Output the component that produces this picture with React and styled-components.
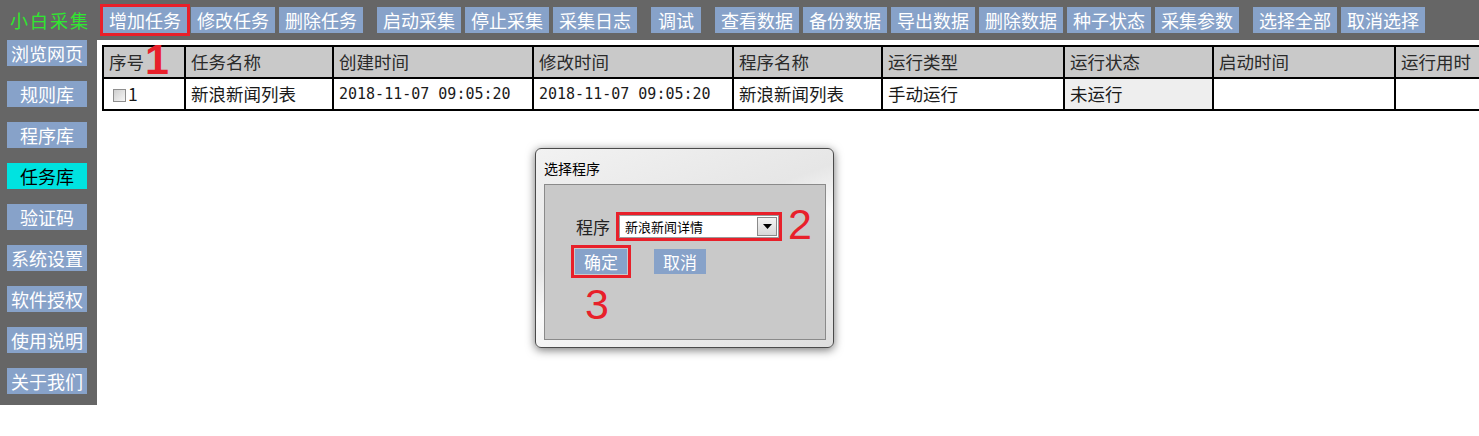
import React from 'react';
import styled, { createGlobalStyle } from 'styled-components';

const Global = createGlobalStyle`
  html, body { margin: 0; padding: 0; background: #fff; overflow: hidden; }
  body { font-family: "Noto Sans CJK SC", "Noto Sans", sans-serif; }
`;

const RED = '#e8202a';
const BLUE = '#87a2c9';
const GRAY = '#666666';

const Page = styled.div`
  position: relative;
  width: 1479px;
  height: 436px;
  overflow: hidden;
  background: #fff;
`;

const TopBar = styled.header`
  display: flex;
  align-items: center;
  height: 40px;
  background: ${GRAY};
`;

const Brand = styled.div`
  flex: none;
  width: 97px;
  box-sizing: border-box;
  padding-left: 10px;
  color: #2fe82f;
  font-size: 18px;
  letter-spacing: 2px;
  line-height: 40px;
  white-space: nowrap;
`;

const Toolbar = styled.nav`
  display: flex;
  align-items: center;
  gap: 4px;
  padding-left: 6px;
`;

const ToolButton = styled.button`
  flex: none;
  min-width: 50px;
  height: 26px;
  padding: 0 6px;
  margin-left: ${(p) => (p.$groupStart ? '10px' : '0')};
  border: none;
  background: ${BLUE};
  color: #fff;
  font-family: inherit;
  font-size: 18px;
  line-height: 26px;
  white-space: nowrap;
  outline: ${(p) => (p.$marked ? `3px solid ${RED}` : 'none')};
  cursor: pointer;
`;

const Main = styled.div`
  display: flex;
  align-items: flex-start;
`;

const Sidebar = styled.aside`
  flex: none;
  width: 97px;
  box-sizing: border-box;
  padding: 0 0 11px 7px;
  background: ${GRAY};
  display: flex;
  flex-direction: column;
  gap: 15px;
`;

const SideButton = styled.button`
  width: 80px;
  height: 26px;
  padding: 0;
  border: none;
  background: ${(p) => (p.$active ? '#00e3e0' : BLUE)};
  color: ${(p) => (p.$active ? '#000' : '#fff')};
  font-family: inherit;
  font-size: 18px;
  line-height: 26px;
  white-space: nowrap;
  text-align: center;
  overflow: visible;
  cursor: pointer;
`;

const Content = styled.section`
  flex: 1;
  padding: 5px 0 0 5px;
  overflow: hidden;
`;

const Table = styled.table`
  border-collapse: collapse;
  table-layout: fixed;
  width: 1460px;
  font-size: 17.5px;
  color: #1a1a1a;
`;

const Th = styled.th`
  height: 30px;
  padding: 0 5px;
  border: 2px solid #000;
  background: #c9c9c9;
  font-weight: normal;
  text-align: left;
  line-height: 30px;
  white-space: nowrap;
  color: #2a2a2a;
`;

const Td = styled.td`
  height: 30px;
  padding: 0 5px;
  border: 2px solid #000;
  background: ${(p) => (p.$shade ? '#eeeeee' : '#fff')};
  line-height: 30px;
  white-space: nowrap;
  font-family: ${(p) => (p.$mono ? '"DejaVu Sans Mono", "Liberation Mono", monospace' : 'inherit')};
  font-size: ${(p) => (p.$mono ? '15px' : '17.5px')};
`;

const Check = styled.span`
  display: inline-block;
  width: 11px;
  height: 11px;
  margin: 0 2px 0 4px;
  vertical-align: -1px;
  border: 1px solid #8e8e8e;
  background: linear-gradient(135deg, #cfcfcf, #f6f6f6);
`;

const Dialog = styled.div`
  position: absolute;
  left: 535px;
  top: 148px;
  width: 299px;
  height: 200px;
  box-sizing: border-box;
  padding: 0 7px 7px 8px;
  border: 1px solid #4a4a4a;
  border-radius: 6px;
  background: linear-gradient(160deg, #f2f2f2 0%, #e6e6e6 40%, #fafafa 55%, #dedede 100%);
  box-shadow: 0 2px 10px rgba(0, 0, 0, 0.55);
  display: flex;
  flex-direction: column;
`;

const DialogTitle = styled.div`
  height: 35px;
  font-size: 14px;
  line-height: 38px;
  color: #000;
`;

const Panel = styled.div`
  flex: 1;
  box-sizing: border-box;
  border: 1px solid #8a8a8a;
  background: #c9c9c9;
  padding: 30px 0 0 31px;
  display: flex;
  flex-direction: column;
  gap: 11px;
`;

const FieldRow = styled.div`
  display: flex;
  align-items: center;
  gap: 9px;
`;

const Label = styled.span`
  font-size: 17px;
  line-height: 23px;
  color: #222;
`;

const Select = styled.div`
  position: relative;
  width: 160px;
  height: 23px;
  box-sizing: border-box;
  border: 1px solid #9a9a9a;
  background: #fff;
  outline: 3px solid ${RED};
  display: flex;
  align-items: center;
  justify-content: space-between;
  padding: 0 1px 0 5px;
  font-size: 13px;
  color: #000;
`;

const Arrow = styled.span`
  width: 20px;
  height: 19px;
  box-sizing: border-box;
  border: 1px solid #8a8a8a;
  background: linear-gradient(#f4f4f4, #d8d8d8);
  display: flex;
  align-items: center;
  justify-content: center;
`;

const ButtonRow = styled.div`
  display: flex;
  gap: 27px;
  margin-left: -1px;
`;

const DialogButton = styled.button`
  width: 52px;
  height: 25px;
  padding: 0;
  border: none;
  background: ${BLUE};
  color: #fff;
  font-family: inherit;
  font-size: 17px;
  line-height: 25px;
  outline: ${(p) => (p.$marked ? `3px solid ${RED}` : 'none')};
  outline-offset: 1px;
  cursor: pointer;
`;

const Marker = styled.span`
  position: absolute;
  color: ${RED};
  font-family: "Liberation Sans", Arial, sans-serif;
  font-size: 43px;
  font-weight: ${(p) => (p.$bold ? 700 : 400)};
  line-height: 1;
  pointer-events: none;
`;

const groups = [
  ['增加任务', '修改任务', '删除任务'],
  ['启动采集', '停止采集', '采集日志'],
  ['调试'],
  ['查看数据', '备份数据', '导出数据', '删除数据', '种子状态', '采集参数'],
  ['选择全部', '取消选择'],
];

const sideItems = ['浏览网页', '规则库', '程序库', '任务库', '验证码', '系统设置', '软件授权', '使用说明', '关于我们'];

const columns = [
  ['序号', 82],
  ['任务名称', 148],
  ['创建时间', 200],
  ['修改时间', 200],
  ['程序名称', 149],
  ['运行类型', 182],
  ['运行状态', 149],
  ['启动时间', 182],
  ['运行用时', 168],
];

export default function App() {
  return (
    <Page>
      <Global />
      <TopBar>
        <Brand>小白采集</Brand>
        <Toolbar>
          {groups.map((g, gi) =>
            g.map((label, i) => (
              <ToolButton key={label} $groupStart={gi > 0 && i === 0} $marked={label === '增加任务'}>
                {label}
              </ToolButton>
            ))
          )}
        </Toolbar>
      </TopBar>
      <Main>
        <Sidebar>
          {sideItems.map((s) => (
            <SideButton key={s} $active={s === '任务库'}>
              {s}
            </SideButton>
          ))}
        </Sidebar>
        <Content>
          <Table>
            <colgroup>
              {columns.map(([n, w]) => (
                <col key={n} style={{ width: w }} />
              ))}
            </colgroup>
            <thead>
              <tr>
                {columns.map(([n]) => (
                  <Th key={n}>{n}</Th>
                ))}
              </tr>
            </thead>
            <tbody>
              <tr>
                <Td>
                  <Check />1
                </Td>
                <Td>新浪新闻列表</Td>
                <Td $mono>2018-11-07 09:05:20</Td>
                <Td $mono>2018-11-07 09:05:20</Td>
                <Td>新浪新闻列表</Td>
                <Td>手动运行</Td>
                <Td $shade>未运行</Td>
                <Td />
                <Td />
              </tr>
            </tbody>
          </Table>
        </Content>
      </Main>

      <Dialog>
        <DialogTitle>选择程序</DialogTitle>
        <Panel>
          <FieldRow>
            <Label>程序</Label>
            <Select>
              <span>新浪新闻详情</span>
              <Arrow>
                <svg width="9" height="5" viewBox="0 0 9 5">
                  <path d="M0 0 H9 L4.5 5 Z" fill="#000" />
                </svg>
              </Arrow>
            </Select>
          </FieldRow>
          <ButtonRow>
            <DialogButton $marked>确定</DialogButton>
            <DialogButton>取消</DialogButton>
          </ButtonRow>
        </Panel>
      </Dialog>

      <Marker $bold style={{ left: 145, top: 38 }}>1</Marker>
      <Marker style={{ left: 788, top: 203 }}>2</Marker>
      <Marker style={{ left: 585, top: 283 }}>3</Marker>
    </Page>
  );
}
